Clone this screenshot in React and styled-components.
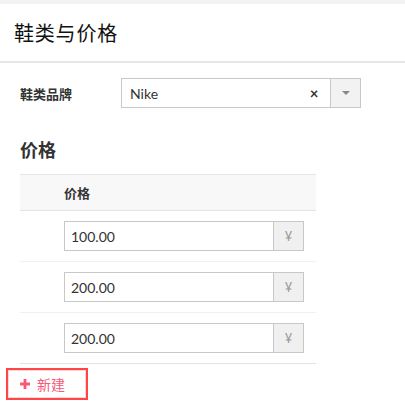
import React from "react"
import styled, { createGlobalStyle } from "styled-components"

const GlobalStyle = createGlobalStyle`
    body {
        margin: 0;
        background: #fff;
        font-family: Lato, "Noto Sans CJK SC", sans-serif;
        color: #333;
    }
`

const Page = styled.div`
    width: 405px;
    border-top: 4px solid #f2f2f2;
`

const Header = styled.div`
    height: 57px;
    display: flex;
    align-items: center;
    padding-left: 14px;
    border-bottom: 2px solid #e6e6e6;
`

const Title = styled.h1`
    margin: 0;
    font-size: 20px;
    font-weight: 400;
    color: #111;
    letter-spacing: 0.8px;
`

const Body = styled.div`
    padding: 15px 0 0 20px;
`

const FormRow = styled.div`
    display: flex;
    align-items: center;
`

const Label = styled.div`
    width: 101px;
    font-size: 13px;
    font-weight: 700;
    color: #333;
`

const Select = styled.div`
    width: 240px;
    height: 30px;
    box-sizing: border-box;
    border: 1px solid #c8c8c8;
    display: flex;
    align-items: stretch;
`

const SelectValue = styled.div`
    flex: 1;
    display: flex;
    align-items: center;
    padding-left: 8px;
    font-size: 14px;
    color: #333;
`

const Clear = styled.span`
    width: 20px;
    display: flex;
    align-items: center;
    justify-content: center;
    font-size: 15px;
    font-weight: 700;
    color: #333;
    margin-right: 6px;
`

const Caret = styled.div`
    width: 29px;
    background: #f2f2f2;
    border-left: 1px solid #c8c8c8;
    display: flex;
    align-items: center;
    justify-content: center;

    &::after {
        content: "";
        border-style: solid;
        border-width: 4px 4px 0 4px;
        border-color: #888 transparent transparent transparent;
    }
`

const SectionTitle = styled.h2`
    margin: 29px 0 11px;
    font-size: 18px;
    line-height: 26px;
    font-weight: 700;
    color: #333;
`

const Table = styled.div`
    width: 296px;
    border-top: 1px solid #e6e6e6;
    border-bottom: 1px solid #e3e3e3;
`

const HeadRow = styled.div`
    height: 35px;
    background: #f8f8f8;
    border-bottom: 1px solid #e3e3e3;
    display: flex;
    align-items: center;
    padding-left: 44px;
    font-size: 13px;
    font-weight: 700;
    color: #333;
`

const Row = styled.div`
    display: flex;
    align-items: flex-start;
    padding: 10px 0 0 44px;
    box-sizing: border-box;
    border-top: ${p => (p.first ? "none" : "1px solid #f0f0f0")};
    height: ${p => (p.first ? "50px" : "51px")};
`

const InputGroup = styled.div`
    width: 240px;
    height: 30px;
    box-sizing: border-box;
    border: 1px solid #c8c8c8;
    display: flex;
`

const Input = styled.div`
    flex: 1;
    display: flex;
    align-items: center;
    padding-left: 6px;
    font-size: 14px;
    color: #333;
`

const Addon = styled.div`
    width: 29px;
    background: #f0f0f0;
    border-left: 1px solid #c8c8c8;
    display: flex;
    align-items: center;
    justify-content: center;
    font-size: 13px;
    color: #999;
`

const AddButton = styled.button`
    margin: 4px 0 0 -14px;
    width: 82px;
    height: 32px;
    box-sizing: border-box;
    border: 2px solid #ff4548;
    box-shadow: inset 0 0 0 1px #ffd6d8;
    background: #fff;
    display: flex;
    align-items: center;
    padding: 0 0 0 12px;
    gap: 7px;
    font-family: inherit;
    font-size: 14px;
    color: #f55a78;
`

const Plus = styled.svg`
    width: 10px;
    height: 10px;
`

const prices = ["100.00", "200.00", "200.00"]

const App = () => {
    return (
        <Page>
            <GlobalStyle />
            <Header>
                <Title>鞋类与价格</Title>
            </Header>
            <Body>
                <FormRow>
                    <Label>鞋类品牌</Label>
                    <Select>
                        <SelectValue>Nike</SelectValue>
                        <Clear>×</Clear>
                        <Caret />
                    </Select>
                </FormRow>

                <SectionTitle>价格</SectionTitle>

                <Table>
                    <HeadRow>价格</HeadRow>
                    {prices.map((price, i) => (
                        <Row key={i} first={i === 0}>
                            <InputGroup>
                                <Input>{price}</Input>
                                <Addon>¥</Addon>
                            </InputGroup>
                        </Row>
                    ))}
                </Table>

                <AddButton>
                    <Plus viewBox="0 0 10 10">
                        <path d="M3.6 0h2.8v3.6H10v2.8H6.4V10H3.6V6.4H0V3.6h3.6z" fill="#f55a78" />
                    </Plus>
                    新建
                </AddButton>
            </Body>
        </Page>
    )
}

export default App
